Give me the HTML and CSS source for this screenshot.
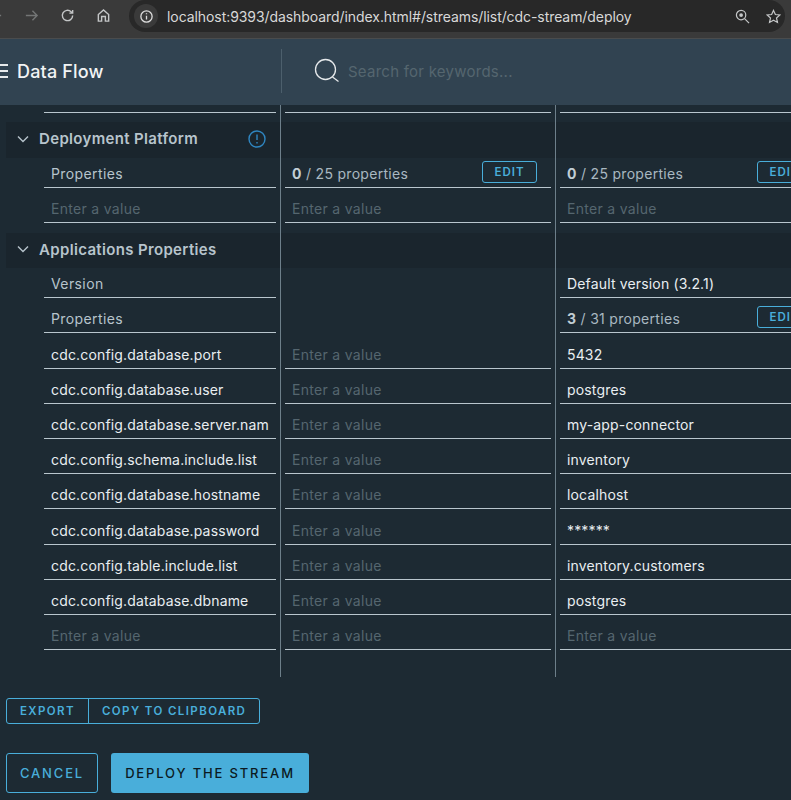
FILE: index.html
```html
<!DOCTYPE html>
<html>
<head>
    <title>Deploy stream</title>
    <link rel="stylesheet" href="styles.css">
</head>
<body>
    <div class="browser-bar">
        <div class="nav-icons">
            <svg class="nav-icon dim" viewBox="0 0 16 16"><path d="M14 8H2M7 3L2 8l5 5"/></svg>
            <svg class="nav-icon dim" viewBox="0 0 16 16"><path d="M2 8h12M9 3l5 5-5 5"/></svg>
            <svg class="nav-icon" viewBox="0 0 16 16"><path d="M13.5 8a5.5 5.5 0 1 1-1.7-4L13.5 5.5M13.5 2v3.5H10"/></svg>
            <svg class="nav-icon" viewBox="0 0 16 16"><path d="M2.5 14V7L8 2l5.500 5v7h-3.500V9H6v5z"/></svg>
        </div>
        <div class="url-pill">
            <span class="info-chip">
                <svg class="info-icon" viewBox="0 0 16 16"><circle cx="8" cy="8" r="6"/><path d="M8 7.200v4M8 4.400v1.200"/></svg>
            </span>
            <span class="url">localhost:9393/dashboard/index.html#/streams/list/cdc-stream/deploy</span>
            <svg class="url-icon zoom" viewBox="0 0 16 16"><circle cx="6.500" cy="6.500" r="5"/><circle class="solid" cx="6.500" cy="6.500" r="2"/><path d="M10.200 10.200L15 15"/></svg>
            <svg class="url-icon star" viewBox="0 0 16 16"><path d="M8 1.500l2 4.400 4.800.5-3.600 3.200 1 4.700L8 11.900l-4.200 2.400 1-4.700L1.200 6.400 6 5.900z"/></svg>
        </div>
    </div>

    <header class="app-header">
        <div class="brand">
            <span class="burger"><i></i><i></i><i></i></span>
            <span class="brand-name">Data Flow</span>
        </div>
        <div class="search">
            <svg class="search-icon" viewBox="0 0 26 26"><circle cx="11.500" cy="11.500" r="10"/><path d="M18.500 19l6 4.500"/></svg>
            <span class="search-text">Search for keywords...</span>
        </div>
    </header>

    <main class="content">
        <div class="row stub">
            <div class="cell"><span class="field"></span></div>
            <div class="cell"><span class="field"></span></div>
            <div class="cell"><span class="field"></span></div>
        </div>
        <div class="row band">
            <div class="cell head">
                <svg class="chevron" viewBox="0 0 12 8"><path d="M1 1.500l5 5 5-5"/></svg>
                <span>Deployment Platform</span>
                <svg class="alert" viewBox="0 0 18 18"><circle cx="9" cy="9" r="8"/><path d="M9 4.500v5.500M9 12v1.500"/></svg>
            </div>
            <div class="cell"></div>
            <div class="cell"></div>
        </div>
        <div class="row first">
            <div class="cell"><span class="field muted">Properties</span></div>
            <div class="cell"><span class="field count"><span><b>0</b> / 25 properties</span><button class="btn-edit">EDIT</button></span></div>
            <div class="cell"><span class="field count"><span><b>0</b> / 25 properties</span><button class="btn-edit">EDIT</button></span></div>
        </div>
        <div class="row">
            <div class="cell"><span class="field ph">Enter a value</span></div>
            <div class="cell"><span class="field ph">Enter a value</span></div>
            <div class="cell"><span class="field ph">Enter a value</span></div>
        </div>
        <div class="row gap"><div class="cell"></div><div class="cell"></div><div class="cell"></div></div>
        <div class="row band">
            <div class="cell head">
                <svg class="chevron" viewBox="0 0 12 8"><path d="M1 1.500l5 5 5-5"/></svg>
                <span>Applications Properties</span>
            </div>
            <div class="cell"></div>
            <div class="cell"></div>
        </div>
        <div class="row first">
            <div class="cell"><span class="field muted">Version</span></div>
            <div class="cell"></div>
            <div class="cell"><span class="field">Default version (3.2.1)</span></div>
        </div>
        <div class="row">
            <div class="cell"><span class="field muted">Properties</span></div>
            <div class="cell"></div>
            <div class="cell"><span class="field count"><span><b>3</b> / 31 properties</span><button class="btn-edit">EDIT</button></span></div>
        </div>
        <div class="row">
            <div class="cell"><span class="field">cdc.config.database.port</span></div>
            <div class="cell"><span class="field ph">Enter a value</span></div>
            <div class="cell"><span class="field">5432</span></div>
        </div>
        <div class="row">
            <div class="cell"><span class="field">cdc.config.database.user</span></div>
            <div class="cell"><span class="field ph">Enter a value</span></div>
            <div class="cell"><span class="field">postgres</span></div>
        </div>
        <div class="row">
            <div class="cell"><span class="field">cdc.config.database.server.nam</span></div>
            <div class="cell"><span class="field ph">Enter a value</span></div>
            <div class="cell"><span class="field">my-app-connector</span></div>
        </div>
        <div class="row">
            <div class="cell"><span class="field">cdc.config.schema.include.list</span></div>
            <div class="cell"><span class="field ph">Enter a value</span></div>
            <div class="cell"><span class="field">inventory</span></div>
        </div>
        <div class="row">
            <div class="cell"><span class="field">cdc.config.database.hostname</span></div>
            <div class="cell"><span class="field ph">Enter a value</span></div>
            <div class="cell"><span class="field">localhost</span></div>
        </div>
        <div class="row">
            <div class="cell"><span class="field">cdc.config.database.password</span></div>
            <div class="cell"><span class="field ph">Enter a value</span></div>
            <div class="cell"><span class="field">******</span></div>
        </div>
        <div class="row">
            <div class="cell"><span class="field">cdc.config.table.include.list</span></div>
            <div class="cell"><span class="field ph">Enter a value</span></div>
            <div class="cell"><span class="field">inventory.customers</span></div>
        </div>
        <div class="row">
            <div class="cell"><span class="field">cdc.config.database.dbname</span></div>
            <div class="cell"><span class="field ph">Enter a value</span></div>
            <div class="cell"><span class="field">postgres</span></div>
        </div>
        <div class="row">
            <div class="cell"><span class="field ph">Enter a value</span></div>
            <div class="cell"><span class="field ph">Enter a value</span></div>
            <div class="cell"><span class="field ph">Enter a value</span></div>
        </div>
        <div class="row tail"><div class="cell"></div><div class="cell"></div><div class="cell"></div></div>

        <div class="btn-group">
            <button class="btn-small">EXPORT</button>
            <button class="btn-small">COPY TO CLIPBOARD</button>
        </div>
        <div class="actions">
            <button class="btn btn-outline">CANCEL</button>
            <button class="btn btn-primary">DEPLOY THE STREAM</button>
        </div>
    </main>
</body>
</html>
```

FILE: styles.css
```css
* {
    box-sizing: border-box;
}

body {
    margin: 0;
    width: 791px;
    height: 800px;
    overflow: hidden;
    font-family: Inter, "Liberation Sans", sans-serif;
    font-size: 14px;
    letter-spacing: 0.160px;
    color: #e9eef1;
    background-color: #1d2a33;
}

button {
    font-family: inherit;
    cursor: pointer;
}

.browser-bar {
    height: 39px;
    display: flex;
    background-color: #3a3a3a;
    border-bottom: 1px solid #4a4c4d;
}

.nav-icons {
    display: flex;
    align-items: center;
    gap: 21px;
    width: 141px;
    height: 30px;
    margin-left: -12px;
}

.nav-icon {
    flex: none;
    width: 15px;
    height: 15px;
    fill: none;
    stroke: #c4c6c7;
    stroke-width: 1.500;
}

.nav-icon.dim {
    stroke: #737575;
}

.url-pill {
    display: flex;
    align-items: center;
    width: 656px;
    height: 32px;
    padding-left: 5px;
    background-color: #282828;
    border-radius: 16px;
}

.info-chip {
    display: flex;
    align-items: center;
    justify-content: center;
    width: 24px;
    height: 24px;
    border-radius: 50%;
    background-color: #3a3a3a;
}

.info-icon {
    width: 15px;
    height: 15px;
    fill: none;
    stroke: #dcdcdc;
    stroke-width: 1.400;
}

.url {
    flex: 1;
    margin-left: 9px;
    font-size: 14px;
    letter-spacing: -0.070px;
    color: #d8d8d8;
    white-space: nowrap;
}

.url-icon {
    width: 15px;
    height: 15px;
    fill: none;
    stroke: #c4c6c7;
    stroke-width: 1.300;
}

.url-icon .solid {
    fill: #c4c6c7;
    stroke: none;
}

.url-icon.zoom {
    margin-right: 16px;
}

.url-icon.star {
    margin-right: 4px;
}

.app-header {
    height: 66px;
    display: flex;
    align-items: center;
    padding-bottom: 2px;
    background-color: #314351;
}

.brand {
    display: flex;
    align-items: center;
    gap: 9px;
    width: 285px;
    height: 44px;
    margin-left: -3px;
    border-right: 1px solid #4c5f6c;
}

.burger {
    display: flex;
    flex-direction: column;
    gap: 4px;
    width: 11px;
}

.burger i {
    height: 2px;
    background-color: #e6e9eb;
}

.brand-name {
    font-size: 18px;
    font-weight: 500;
    color: #f2f4f5;
}

.search {
    display: flex;
    align-items: center;
    gap: 8px;
    padding-left: 32px;
}

.search-icon {
    width: 26px;
    height: 26px;
    fill: none;
    stroke: #e6e9eb;
    stroke-width: 1.300;
}

.search-text {
    font-size: 15px;
    letter-spacing: 0.250px;
    color: #55666f;
}

.row {
    display: grid;
    grid-template-columns: 280px 275px 275px;
    grid-template-rows: 100%;
    height: 35.200px;
}

.cell {
    display: flex;
    align-items: stretch;
    min-width: 0;
}

.cell + .cell {
    border-left: 1px solid #6d7f8a;
    padding-left: 4px;
    padding-right: 4px;
}

.cell:first-child {
    padding-left: 44px;
    padding-right: 4px;
}

.field {
    display: flex;
    align-items: flex-end;
    justify-content: space-between;
    width: 100%;
    padding: 0 0 4px 7px;
    line-height: 18px;
    color: #e9eef1;
    border-bottom: 1px solid #b9c6ce;
    white-space: nowrap;
}

.muted {
    letter-spacing: 0.400px;
    color: #b7c4cc;
}

.ph {
    letter-spacing: 0.300px;
    color: #55666f;
}

.count {
    letter-spacing: 0.300px;
    color: #a9b8c1;
}

.count b {
    font-weight: 700;
    color: #c2ced5;
}

.stub {
    height: 17px;
}

.stub .cell {
    align-items: flex-start;
}

.stub .field {
    height: 8px;
    padding: 0;
}

.band {
    height: 35px;
    margin-left: 6px;
    grid-template-columns: 274px 275px 275px;
    background-color: #1a252d;
}

.stub + .band {
    height: 36px;
}

.band .cell:first-child {
    display: flex;
    align-items: center;
    padding-left: 11px;
    padding-bottom: 3px;
    font-size: 15px;
    font-weight: 600;
    letter-spacing: 0.340px;
    color: #b7c4cc;
}

.chevron {
    flex: none;
    width: 12px;
    height: 8px;
    margin-right: 10px;
    fill: none;
    stroke: #b7c4cc;
    stroke-width: 1.400;
}

.alert {
    flex: none;
    width: 18px;
    height: 18px;
    margin-left: 50px;
    fill: none;
    stroke: #2f86c1;
    stroke-width: 1.400;
}

.first {
    height: 30px;
}

.gap {
    height: 10px;
}

.tail {
    height: 27px;
}

.btn-edit {
    flex: none;
    width: 55px;
    height: 22px;
    margin-right: 14px;
    padding: 0;
    font-size: 11.500px;
    font-weight: 600;
    letter-spacing: 1px;
    color: #49aeda;
    background: none;
    border: 1px solid #49aeda;
    border-radius: 3px;
}

.btn-group {
    display: inline-flex;
    margin: 20.500px 0 0 6px;
    border: 1px solid #49aeda;
    border-radius: 3px;
    vertical-align: top;
}

.btn-small {
    height: 24px;
    padding: 0 13px;
    font-size: 11.500px;
    font-weight: 600;
    letter-spacing: 1.400px;
    color: #49aeda;
    background: none;
    border: none;
}

.btn-small + .btn-small {
    border-left: 1px solid #49aeda;
}

.actions {
    display: flex;
    gap: 13px;
    margin: 29px 0 0 6px;
}

.btn {
    height: 40px;
    padding: 0;
    font-size: 13px;
    font-weight: 500;
    letter-spacing: 1.850px;
    border-radius: 3px;
}

.btn-outline {
    width: 92px;
    color: #49aeda;
    background: none;
    border: 1px solid #49aeda;
}

.btn-primary {
    width: 198px;
    color: #0c1a22;
    background-color: #49aeda;
    border: none;
}
```
